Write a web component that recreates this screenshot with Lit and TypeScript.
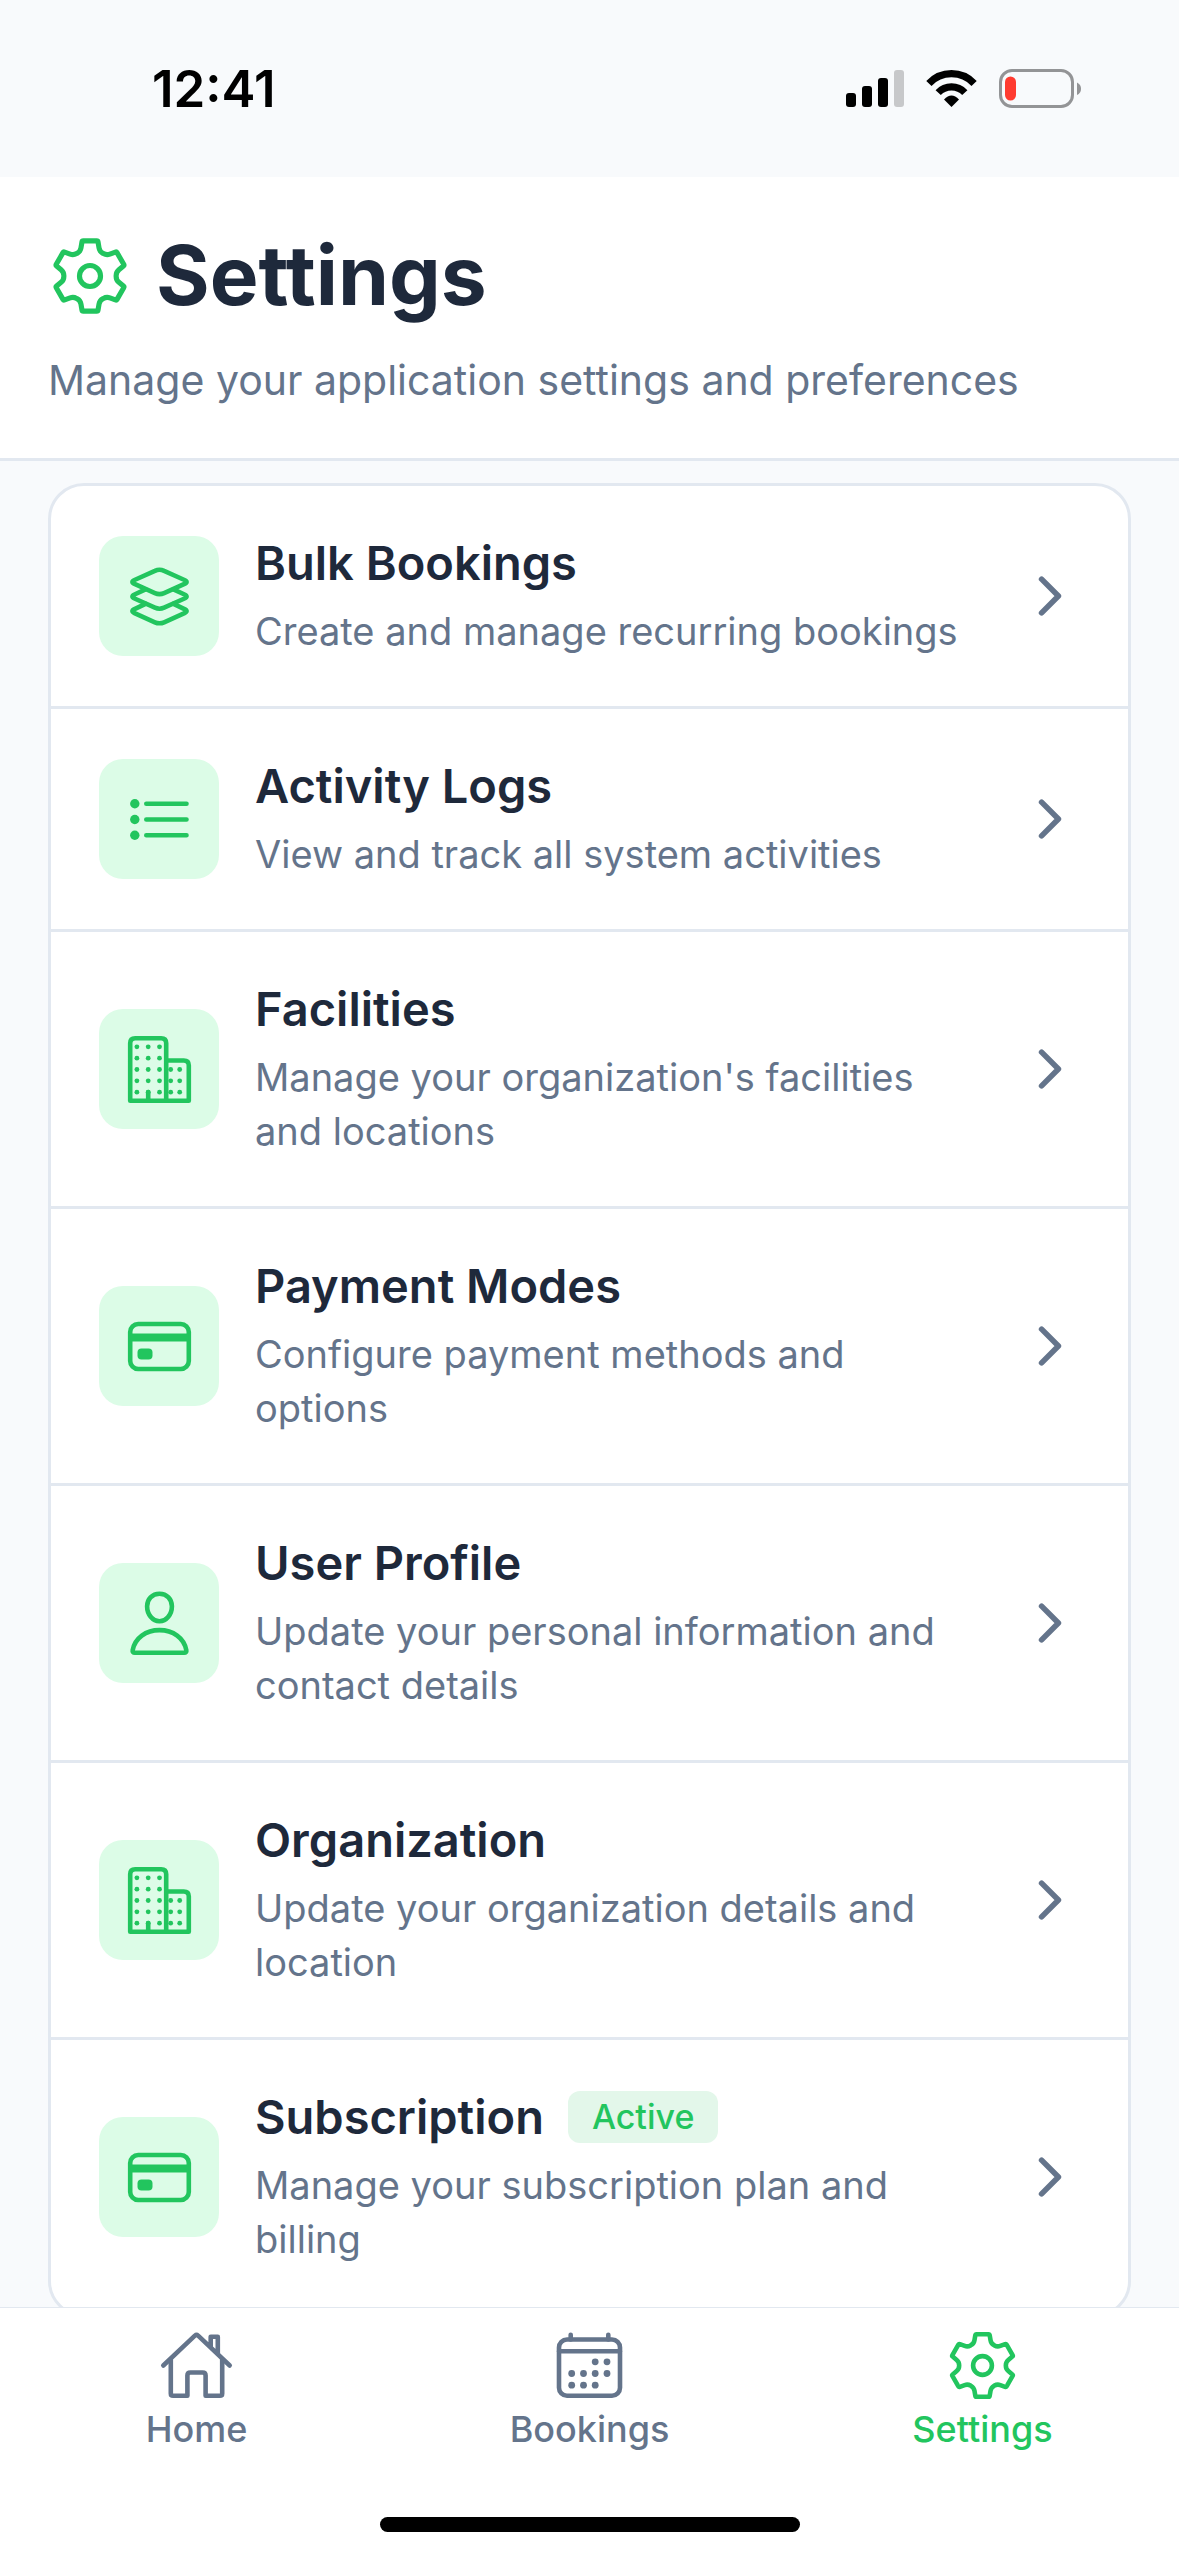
import { LitElement, html, svg, css, nothing, SVGTemplateResult } from "lit";
import { customElement, property } from "lit/decorators.js";

type IconName = "gear" | "layers" | "list" | "building" | "card" | "user" | "home" | "calendar" | "chevron";

interface SettingsItem {
  icon: IconName;
  title: string;
  text: string;
  badge?: string;
}

/** Outline of a six-toothed gear with softly rounded corners, centred on the origin. */
function gearOutline(): string {
  const points: [number, number][] = [];
  for (let i = 0; i < 6; i++) {
    const a = (i * Math.PI) / 3;
    const corners = [[-8.6, -22], [-7, -31.3], [7, -31.3], [8.6, -22]];
    for (const [x, y] of corners) {
      points.push([x * Math.cos(a) - y * Math.sin(a), x * Math.sin(a) + y * Math.cos(a)]);
    }
  }
  const n = points.length;
  const toward = (p: number[], q: number[], d: number) => {
    const len = Math.hypot(q[0] - p[0], q[1] - p[1]);
    return [p[0] + ((q[0] - p[0]) * d) / len, p[1] + ((q[1] - p[1]) * d) / len];
  };
  let path = "";
  points.forEach((p, i) => {
    const radius = i % 4 === 0 || i % 4 === 3 ? 3.2 : 1;
    const from = toward(p, points[(i + n - 1) % n], radius);
    const to = toward(p, points[(i + 1) % n], radius);
    path += `${i ? "L" : "M"}${from.map((v) => v.toFixed(2))}Q${p.map((v) => v.toFixed(2))} ${to.map((v) => v.toFixed(2))}`;
  });
  return path + "Z";
}

const dots = (list: number[][], r: number) =>
  list.map(([x, y]) => svg`<circle cx=${x} cy=${y} r=${r} fill="currentColor" stroke="none" />`);

const ICONS: Record<IconName, SVGTemplateResult> = {
  gear: svg`<path d=${gearOutline()} /><circle r="9.4" />`,
  layers: svg`
    <path d="M-4.6-25.6Q0-27.8 4.6-25.6L25-16.5Q29.2-14.6 25-12.6L4.6-3.4Q0-1.4-4.6-3.4L-25-12.6Q-29.2-14.6-25-16.5Z" />
    <path d="M-14-7.2L-25-2Q-29.2 0-25 2L-4.6 11.2Q0 13.2 4.6 11.2L25 2Q29.2 0 25-2L14-7.2" />
    <path d="M-14 7.4L-25 12.6Q-29.2 14.6-25 16.6L-4.6 25.8Q0 27.8 4.6 25.8L25 16.6Q29.2 14.6 25 12.6L14 7.4" />`,
  list: svg`${dots([[-24.7, -15.7], [-24.7, 0], [-24.7, 15.7]], 4.7)}
    <path d="M-13.2-15.7H27M-13.2 0H27M-13.2 15.7H27" />`,
  building: svg`
    <path d="M-29.3 31.3V-26.3Q-29.3-31.3-24.3-31.3H1.7Q6.7-31.3 6.7-26.3V31.3M6.7-9H24.3Q29.3-9 29.3-4V31.3H-29.3M-11.3 31V22.6" />
    ${dots(
      [-22.7, -11.3, 0, 11.3, 22.7].flatMap((y) => [-22.6, -11.3, 0].map((x) => [x, y])),
      2.4
    )}
    ${dots([0, 11.3, 22.7].flatMap((y) => [11.2, 20.2].map((x) => [x, y])), 2.4)}`,
  card: svg`
    <rect x="-29.3" y="-22.5" width="58.6" height="45" rx="8" />
    <path d="M-29.3-13H29.3V-5H-29.3Z" fill="currentColor" stroke="none" />
    <rect x="-22" y="2" width="15" height="11" rx="4" fill="currentColor" stroke="none" />`,
  user: svg`
    <path d="M0-29.7C7.4-29.7 12.4-24.4 12.4-17.2C12.4-9 7-2.3 0-2.3S-12.4-9-12.4-17.2C-12.4-24.4-7.4-29.7 0-29.7Z" />
    <path d="M-24.6 29.3H24.6Q27.3 29.3 26.8 26.6C24.6 14.6 13.6 6.6 0 6.6S-24.6 14.6-26.8 26.6Q-27.3 29.3-24.6 29.3Z" />`,
  home: svg`
    <path d="M-33.2 0L-1.6-29.8Q0-31.2 1.6-29.8L33.2 0M14.2-18V-28.7H21.3V-11.6" />
    <path d="M-25.7-6V28Q-25.7 30.3-23.4 30.3H-9.1V10Q-9.1 7-6.1 7H6.1Q9.1 7 9.1 10V30.3H23.4Q25.7 30.3 25.7 28V-6" />`,
  calendar: svg`
    <rect x="-30.5" y="-26" width="61" height="56.3" rx="8" />
    <path d="M-30.5-14.3H30.5M-18.8-26V-30.8M18.8-26V-30.8" />
    ${dots(
      [[5.7, -3.7], [17.5, -3.7], [-17.8, 8], [-6, 8], [5.7, 8], [17.5, 8], [-17.8, 19.7], [-6, 19.7], [5.7, 19.7]],
      3.4
    )}`,
  chevron: svg`<path d="M-10.5-21.1L10.5 0L-10.5 21.1" stroke-width="7" />`,
};

@customElement("line-icon")
export class LineIcon extends LitElement {
  @property() name: IconName = "gear";

  static styles = css`
    :host {
      display: block;
      flex: none;
      width: 75px;
      height: 75px;
    }
    .glyph {
      display: block;
      width: 100%;
      height: 100%;
    }
  `;

  render() {
    return html`<svg
      class="glyph"
      viewBox="-37.5 -37.5 75 75"
      fill="none"
      stroke="currentColor"
      stroke-width="4.6"
      stroke-linecap="round"
      stroke-linejoin="round"
      aria-hidden="true"
    >
      ${ICONS[this.name]}
    </svg>`;
  }
}

@customElement("status-bar")
export class StatusBar extends LitElement {
  static styles = css`
    :host {
      display: flex;
      align-items: center;
      justify-content: space-between;
      flex: none;
      height: 177px;
      padding: 0 98px 0 152px;
    }
    .time {
      font-size: 51px;
      font-weight: 600;
      line-height: 60px;
      color: #000;
    }
    .indicators {
      display: flex;
      align-items: center;
      gap: 22px;
    }
  `;

  render() {
    return html`
      <span class="time">12:41</span>
      <span class="indicators">
        <svg width="58" height="38" viewBox="0 0 58 38" role="img" aria-label="Signal">
          <rect x="0" y="23" width="10" height="14" rx="3" />
          <rect x="16" y="16" width="10" height="21" rx="3" />
          <rect x="32" y="8" width="10" height="29" rx="3" />
          <rect x="48" y="0" width="10" height="37" rx="3" fill="#c7c8ca" />
        </svg>
        <svg width="51" height="38" viewBox="0 0 51 38" role="img" aria-label="Wi-Fi">
          <g fill="none" stroke="#000" stroke-width="7.2">
            <path d="M2.9 13.5A31 31 0 0 1 48.1 13.5" />
            <path d="M12.2 22.6A18.3 18.3 0 0 1 38.8 22.6" />
          </g>
          <path d="M25.5 37L18 29.4Q25.5 21.4 33 29.4Z" />
        </svg>
        <svg width="82" height="40" viewBox="0 0 82 40" role="img" aria-label="Battery low">
          <rect x="1.5" y="1.5" width="72" height="36" rx="11.5" fill="none" stroke="#939496" stroke-width="3" />
          <path d="M78 13.5Q82 15.5 82 19.8T78 26.1Z" fill="#939496" />
          <rect x="6" y="7.5" width="11" height="24" rx="5.5" fill="#ff3b30" />
        </svg>
      </span>
    `;
  }
}

@customElement("settings-row")
export class SettingsRow extends LitElement {
  @property({ attribute: false }) item!: SettingsItem;

  static styles = css`
    :host {
      display: block;
    }
    .row {
      display: flex;
      align-items: center;
      gap: 36px;
      padding: 48px;
      color: #64748b;
      text-decoration: none;
    }
    .tile {
      display: grid;
      place-items: center;
      flex: none;
      width: 120px;
      height: 120px;
      border-radius: 24px;
      background: #dcfce7;
      color: #22c55e;
    }
    .body {
      display: flex;
      flex-direction: column;
      flex: 1;
      min-width: 0;
      gap: 12px;
    }
    .heading {
      display: flex;
      align-items: center;
      gap: 24px;
    }
    .title {
      margin: 0;
      font-size: 47px;
      font-weight: 600;
      line-height: 58px;
      color: #1e293b;
    }
    .badge {
      padding: 6px 24px;
      border-radius: 12px;
      background: #e3f7ea;
      font-size: 34px;
      font-weight: 500;
      line-height: 40px;
      color: #22c55e;
    }
    .text {
      margin: 0;
      font-size: 38px;
      line-height: 54px;
    }
    .chevron {
      width: 60px;
      height: 60px;
    }
  `;

  render() {
    const { icon, title, text, badge } = this.item;
    return html`
      <a class="row" href="#">
        <span class="tile"><line-icon .name=${icon}></line-icon></span>
        <div class="body">
          <div class="heading">
            <h2 class="title">${title}</h2>
            ${badge ? html`<span class="badge">${badge}</span>` : nothing}
          </div>
          <p class="text">${text}</p>
        </div>
        <line-icon class="chevron" .name=${"chevron"}></line-icon>
      </a>
    `;
  }
}

const ITEMS: SettingsItem[] = [
  { icon: "layers", title: "Bulk Bookings", text: "Create and manage recurring bookings" },
  { icon: "list", title: "Activity Logs", text: "View and track all system activities" },
  { icon: "building", title: "Facilities", text: "Manage your organization's facilities and locations" },
  { icon: "card", title: "Payment Modes", text: "Configure payment methods and options" },
  { icon: "user", title: "User Profile", text: "Update your personal information and contact details" },
  { icon: "building", title: "Organization", text: "Update your organization details and location" },
  { icon: "card", title: "Subscription", text: "Manage your subscription plan and billing", badge: "Active" },
];

const TABS: { icon: IconName; label: string; current?: boolean }[] = [
  { icon: "home", label: "Home" },
  { icon: "calendar", label: "Bookings" },
  { icon: "gear", label: "Settings", current: true },
];

@customElement("app-root")
export class AppRoot extends LitElement {
  static styles = css`
    :host {
      display: flex;
      flex-direction: column;
      height: 100vh;
      background: #f8fafc;
      font-family: Inter, "Liberation Sans", sans-serif;
      font-optical-sizing: none;
      color: #64748b;
    }
    .header {
      display: flex;
      flex-direction: column;
      flex: none;
      gap: 24px;
      padding: 48px;
      border-bottom: 3px solid #e2e8f0;
      background: #fff;
    }
    .brand {
      display: flex;
      align-items: center;
      gap: 24px;
    }
    .brand-icon {
      width: 84px;
      height: 84px;
      color: #22c55e;
    }
    .page-title {
      margin: 0;
      font-size: 82px;
      font-weight: 700;
      line-height: 101px;
      color: #1e293b;
    }
    .subtitle {
      margin: 0;
      font-size: 41px;
      line-height: 60px;
    }
    .content {
      flex: 1;
      min-height: 0;
      padding: 22px 48px;
      overflow-y: auto;
      scrollbar-width: none;
    }
    .card {
      margin: 0;
      padding: 0;
      list-style: none;
      border: 3px solid #e2e8f0;
      border-radius: 36px;
      background: #fff;
    }
    .entry + .entry {
      border-top: 3px solid #e2e8f0;
    }
    .dock {
      flex: none;
      border-top: 1px solid #e2e8f0;
      background: #fff;
    }
    .tabs {
      display: grid;
      grid-template-columns: repeat(3, 1fr);
      padding: 20px 0 68px;
    }
    .tab {
      display: flex;
      flex-direction: column;
      align-items: center;
      gap: 6px;
      font-size: 36px;
      font-weight: 500;
      line-height: 40px;
      color: #64748b;
      text-decoration: none;
    }
    .tab.current {
      color: #22c55e;
    }
    .home-indicator {
      width: 420px;
      height: 15px;
      margin: 0 auto 24px;
      border-radius: 8px;
      background: #000;
    }
  `;

  render() {
    return html`
      <status-bar></status-bar>
      <header class="header">
        <div class="brand">
          <line-icon class="brand-icon" .name=${"gear"}></line-icon>
          <h1 class="page-title">Settings</h1>
        </div>
        <p class="subtitle">Manage your application settings and preferences</p>
      </header>
      <main class="content">
        <ul class="card">
          ${ITEMS.map((item) => html`<li class="entry"><settings-row .item=${item}></settings-row></li>`)}
        </ul>
      </main>
      <footer class="dock">
        <nav class="tabs" aria-label="Main">
          ${TABS.map(
            (tab) => html`
              <a class="tab ${tab.current ? "current" : ""}" href="#" aria-current=${tab.current ? "page" : nothing}>
                <line-icon .name=${tab.icon}></line-icon>
                <span>${tab.label}</span>
              </a>
            `
          )}
        </nav>
        <div class="home-indicator"></div>
      </footer>
    `;
  }
}
